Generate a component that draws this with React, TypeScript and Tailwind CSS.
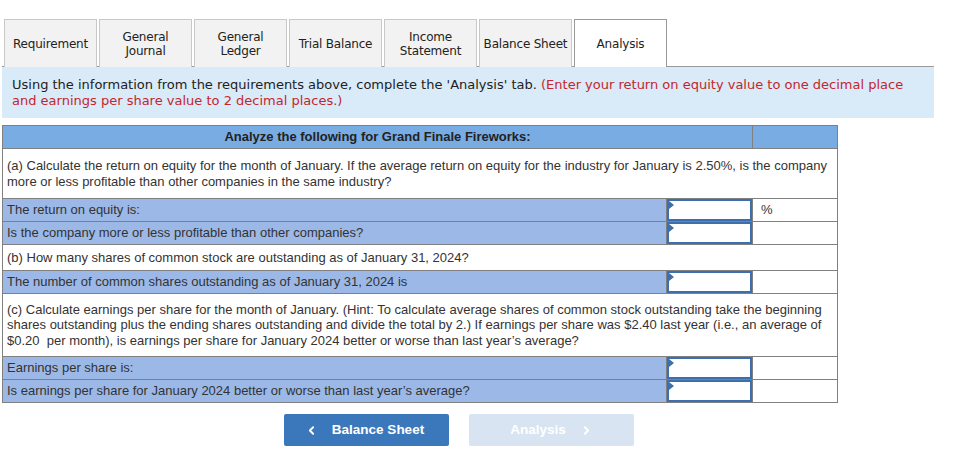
import { ChevronLeft, ChevronRight } from 'lucide-react';

const tabs = [
  { label: ['Requirement'] },
  { label: ['General', 'Journal'] },
  { label: ['General', 'Ledger'] },
  { label: ['Trial Balance'] },
  { label: ['Income', 'Statement'] },
  { label: ['Balance Sheet'] },
  { label: ['Analysis'], active: true },
];

function InputCell() {
  return (
    <td className="p-0 border border-[#808080] h-px">
      <div className="relative h-full min-h-[22px] border-2 border-[#3d6fae] bg-white">
        <span className="absolute left-0 top-0 w-0 h-0 border-y-[4px] border-y-transparent border-l-[5px] border-l-[#3d6fae]" />
      </div>
    </td>
  );
}

function AnswerRow({ label, unit }: { label: string; unit?: string }) {
  return (
    <tr className="h-[23px]">
      <td className="border border-[#808080] bg-[#9cb8e6] px-[4px] py-0">{label}</td>
      <InputCell />
      <td className="border border-[#808080] px-[8px] py-0">{unit}</td>
    </tr>
  );
}

function TextRow({ children, h }: { children: React.ReactNode; h: string }) {
  return (
    <tr className={h}>
      <td colSpan={3} className="border border-[#808080] bg-white px-[4px] py-0 leading-[15.5px]">
        {children}
      </td>
    </tr>
  );
}

export default function App() {
  return (
    <div className="w-[957px] h-[457px] bg-white pt-[19px] pl-[2px] text-[#333]">
      <div className="flex gap-[2px] pl-[2px] relative z-10">
        {tabs.map((t, i) => (
          <div
            key={i}
            className={
              'w-[93px] h-[48px] flex flex-col items-center justify-center text-[12px] leading-[14px] text-center font-["DejaVu_Sans",sans-serif] tracking-[-0.2px] ' +
              (t.active
                ? 'bg-white border border-b-0 border-[#999] text-[#222]'
                : 'bg-[#f2f2f2] border border-b-0 border-[#c8c8c8] text-[#222] h-[47px] self-start')
            }
          >
            {t.label.map((l) => (
              <span key={l}>{l}</span>
            ))}
          </div>
        ))}
      </div>
      <div className="w-[932px] -mt-px border-t border-[#999] bg-[#d9eaf8] px-[10px] pt-[10px] pb-[9px] text-[13px] leading-[16px] font-['DejaVu_Sans',sans-serif] text-[#222]">
        Using the information from the requirements above, complete the 'Analysis' tab.{' '}
        <span className="text-[#c4262e]">
          (Enter your return on equity value to one decimal place and earnings per share value to 2 decimal places.)
        </span>
      </div>

      <table className="mt-[7px] w-[836px] border-collapse border border-[#808080] text-[13px] font-['Liberation_Sans',Arial,sans-serif] text-[#333] h-px">
        <colgroup>
          <col className="w-[665px]" />
          <col className="w-[86px]" />
          <col className="w-[85px]" />
        </colgroup>
        <tbody>
          <tr className="h-[23px] bg-[#79ace2]">
            <td colSpan={2} className="border border-[#808080] text-center font-bold text-[#222] py-0">
              Analyze the following for Grand Finale Fireworks:
            </td>
            <td className="border border-[#808080]" />
          </tr>
          <TextRow h="h-[50px]">
            (a) Calculate the return on equity for the month of January. If the average return on equity for the industry for January is 2.50%, is the company more or less profitable than other companies in the same industry?
          </TextRow>
          <AnswerRow label="The return on equity is:" unit="%" />
          <AnswerRow label="Is the company more or less profitable than other companies?" />
          <TextRow h="h-[26px]">(b) How many shares of common stock are outstanding as of January 31, 2024?</TextRow>
          <AnswerRow label="The number of common shares outstanding as of January 31, 2024 is" />
          <TextRow h="h-[63px]">
            (c) Calculate earnings per share for the month of January. (Hint: To calculate average shares of common stock outstanding take the beginning shares outstanding plus the ending shares outstanding and divide the total by 2.) If earnings per share was $2.40 last year (i.e., an average of $0.20&nbsp; per month), is earnings per share for January 2024 better or worse than last year’s average?
          </TextRow>
          <AnswerRow label="Earnings per share is:" />
          <AnswerRow label="Is earnings per share for January 2024 better or worse than last year’s average?" />
        </tbody>
      </table>

      <div className="flex gap-[20px] ml-[282px] mt-[11px] font-['Liberation_Sans',Arial,sans-serif] text-[13.5px] font-bold text-white">
        <button className="w-[165px] h-[32px] rounded-[2px] bg-[#3a77bb] flex items-center justify-center gap-[14px] pr-[4px]">
          <ChevronLeft size={13} strokeWidth={3.5} />
          <span>Balance Sheet</span>
        </button>
        <button className="w-[165px] h-[32px] rounded-[2px] bg-[#d8e4f1] flex items-center justify-center gap-[14px]">
          <span>Analysis</span>
          <ChevronRight size={13} strokeWidth={3.5} />
        </button>
      </div>
    </div>
  );
}
